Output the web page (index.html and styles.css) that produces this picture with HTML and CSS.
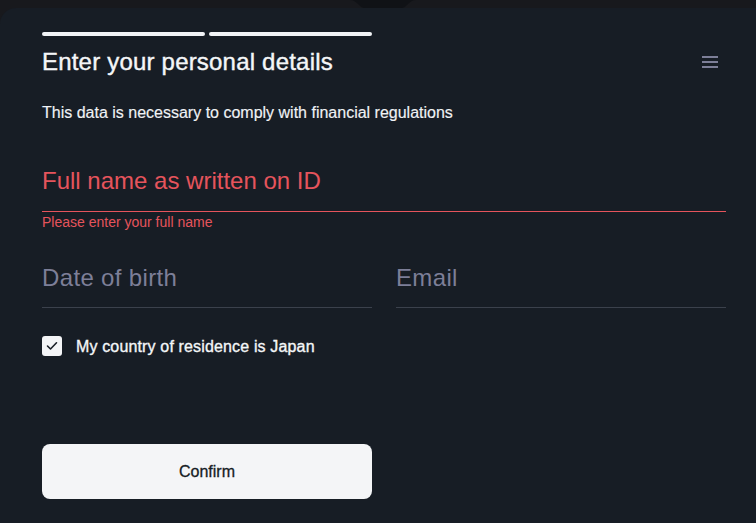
FILE: index.html
```html
<!DOCTYPE html>
<html>
<head>
<meta charset="utf-8">
<link rel="stylesheet" href="styles.css">
</head>
<body>
<div class="notch"><svg width="66" height="9" viewBox="0 0 66 9"><path d="M0 0 H66 C62 0 60 2 57 5 C55 7 54 8 51 8 H15 C12 8 11 7 9 5 C6 2 4 0 0 0 Z" fill="#101216"/></svg></div>
<main class="panel">
  <div class="progress"><span class="bar"></span><span class="bar"></span></div>
  <div class="title-row">
    <h1 class="title">Enter your personal details</h1>
    <svg class="menu" width="16" height="12" viewBox="0 0 16 12"><rect x="0" y="0" width="16" height="2" fill="#7d7f98"/><rect x="0" y="5" width="16" height="2" fill="#7d7f98"/><rect x="0" y="10" width="16" height="2" fill="#7d7f98"/></svg>
  </div>
  <p class="subtitle">This data is necessary to comply with financial regulations</p>
  <div class="field field-error"><span class="label">Full name as written on ID</span></div>
  <div class="error">Please enter your full name</div>
  <div class="row">
    <div class="field"><span class="label">Date of birth</span></div>
    <div class="field"><span class="label">Email</span></div>
  </div>
  <label class="check-row">
    <span class="checkbox"><svg width="12" height="10" viewBox="0 0 12 10"><path d="M1.5 5 L4.5 8 L10.5 1.8" fill="none" stroke="#1a1f27" stroke-width="1.6" stroke-linecap="round" stroke-linejoin="round"/></svg></span>
    <span class="check-label">My country of residence is Japan</span>
  </label>
  <button class="confirm">Confirm</button>
</main>
</body>
</html>
```

FILE: styles.css
```css
* { box-sizing: border-box; }
html, body {
  margin: 0;
  padding: 0;
  height: 100%;
  background: #18191d;
  font-family: "Liberation Sans", Arial, sans-serif;
  overflow: hidden;
}
body {
  padding-top: 8px;
  position: relative;
}
.notch {
  position: absolute;
  top: 0;
  left: 350px;
  width: 66px;
  height: 9px;
  z-index: 2;
}
.notch svg { display: block; }
.panel {
  background: #171d25;
  border-top-left-radius: 16px;
  min-height: 515px;
  padding: 24px 30px 0 42px;
}
.progress {
  display: flex;
  gap: 4px;
  width: 330px;
}
.bar {
  flex: 1;
  height: 4px;
  border-radius: 2px;
  background: #f1f3f6;
}
.title-row {
  display: flex;
  align-items: center;
  justify-content: space-between;
  margin-top: 12px;
}
.title {
  margin: 0;
  font-size: 24px;
  line-height: 28px;
  font-weight: 400;
  letter-spacing: 0.2px;
  color: #f4f6f8;
  -webkit-text-stroke: 0.4px #f4f6f8;
}
.menu {
  display: block;
  margin-right: 8px;
}
.subtitle {
  margin: 27px 0 0;
  font-size: 16px;
  line-height: 20px;
  color: #f0f2f5;
  -webkit-text-stroke: 0.15px #f0f2f5;
}
.field {
  padding-bottom: 16px;
  border-bottom: 1px solid #3b414c;
}
.label {
  display: block;
  font-size: 24px;
  line-height: 28px;
  color: #7d7f98;
}
.row .label { letter-spacing: 0.35px; }
.field-error {
  margin-top: 44px;
  border-bottom-color: #e5545c;
}
.field-error .label { color: #e5545c; }
.error {
  padding-top: 2px;
  font-size: 14px;
  line-height: 16px;
  color: #e5545c;
}
.row {
  display: grid;
  grid-template-columns: 1fr 1fr;
  gap: 24px;
  margin-top: 34px;
}
.row .field { padding-bottom: 15px; }
.check-row {
  display: flex;
  align-items: center;
  gap: 14px;
  margin-top: 28px;
  height: 20px;
}
.checkbox {
  width: 20px;
  height: 20px;
  border-radius: 3px;
  background: #f4f5f7;
  display: flex;
  align-items: center;
  justify-content: center;
}
.checkbox svg { display: block; }
.check-label {
  font-size: 16px;
  line-height: 20px;
  padding-top: 1px;
  letter-spacing: 0.15px;
  color: #f4f6f8;
  -webkit-text-stroke: 0.35px #f4f6f8;
}
.confirm {
  display: block;
  margin-top: 88px;
  width: 330px;
  height: 55px;
  border: none;
  border-radius: 8px;
  background: #f4f5f7;
  color: #161c24;
  font-family: "Liberation Sans", Arial, sans-serif;
  font-size: 16px;
  padding: 1px 0 0;
  -webkit-text-stroke: 0.3px #161c24;
}
```
